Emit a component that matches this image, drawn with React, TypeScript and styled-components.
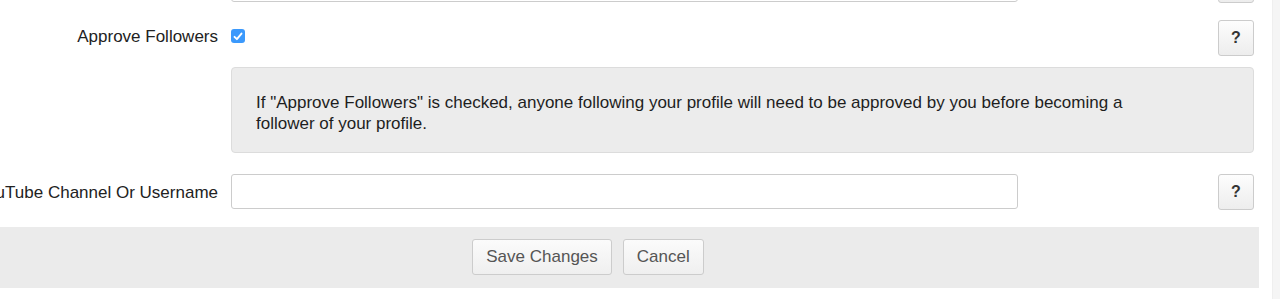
import styled, { createGlobalStyle } from "styled-components"

const GlobalStyle = createGlobalStyle`
  html, body {
    margin: 0;
    padding: 0;
    background: #fff;
    overflow: hidden;
  }
  body {
    font-family: "Liberation Sans", Arial, Helvetica, sans-serif;
    font-size: 17px;
    color: #222;
  }
`

const Page = styled.div`
  display: flex;
  height: 299px;
`

const Content = styled.div`
  flex: 1;
  min-width: 0;
  overflow: hidden;
`

const ScrollTrack = styled.div`
  width: 7px;
  background: #f5f5f5;
  border-left: 1px solid #efefef;
`

const Form = styled.form`
  width: 1342px;
  margin-left: -83px;
  margin-top: -33px;
  display: flex;
  flex-direction: column;
`

const Row = styled.div<{ $gap: number }>`
  display: grid;
  grid-template-columns: 301px 1fr 36px;
  column-gap: 13px;
  align-items: start;
  padding-right: 5px;
  margin-bottom: ${(p) => p.$gap}px;
`

const Label = styled.label<{ $top: number }>`
  text-align: right;
  line-height: 20px;
  padding-top: ${(p) => p.$top}px;
  color: #222;
  white-space: nowrap;
`

const TextInput = styled.input`
  box-sizing: border-box;
  width: 787px;
  height: 35px;
  border: 1px solid #ccc;
  border-radius: 3px;
  background: #fff;
  font: inherit;
  padding: 0 10px;
  outline: none;
`

const CheckCell = styled.div`
  padding-top: 9px;
  line-height: 0;
`

const CheckBox = styled.span`
  display: inline-flex;
  align-items: center;
  justify-content: center;
  width: 14px;
  height: 14px;
  border-radius: 3px;
  background: #3b99fc;
  color: #fff;
`

const HelpButton = styled.button`
  box-sizing: border-box;
  width: 36px;
  height: 36px;
  padding: 0;
  border: 1px solid #ccc;
  border-radius: 3px;
  background: linear-gradient(#fdfdfd, #ededed);
  color: #333;
  font-family: inherit;
  font-size: 16px;
  font-weight: 700;
`

const InfoBox = styled.div`
  grid-column: 2 / 4;
  box-sizing: border-box;
  padding: 24px 24px 18px;
  background: #ececec;
  border: 1px solid #dcdcdc;
  border-radius: 4px;
`

const InfoText = styled.p`
  margin: 0;
  max-width: 890px;
  line-height: 21px;
  color: #1e1e1e;
`

const Footer = styled.div`
  display: flex;
  justify-content: center;
  gap: 11px;
  padding: 12px 0 13px;
  background: #ebebeb;
`

const ActionButton = styled.button`
  height: 36px;
  padding: 0 13px;
  border: 1px solid #ccc;
  border-radius: 3px;
  background: linear-gradient(#fbfbfb, #efefef);
  color: #555;
  font-family: inherit;
  font-size: 17px;
`

function Check() {
  return (
    <svg width="10" height="9" viewBox="0 0 10 9" fill="none">
      <path d="M1.5 4.8 L3.9 7.2 L8.5 1.6" stroke="#fff" strokeWidth="1.9" strokeLinecap="round" strokeLinejoin="round" />
    </svg>
  )
}

export default function App() {
  return (
    <>
      <GlobalStyle />
      <Page>
        <Content>
          <Form onSubmit={(e) => e.preventDefault()}>
            <Row $gap={17}>
              <div />
              <TextInput type="text" aria-label="Previous field" />
              <HelpButton type="button" aria-label="Help" />
            </Row>
            <Row $gap={11}>
              <Label $top={7}>Approve Followers</Label>
              <CheckCell>
                <CheckBox>
                  <Check />
                </CheckBox>
              </CheckCell>
              <HelpButton type="button">?</HelpButton>
            </Row>
            <Row $gap={21}>
              <div />
              <InfoBox>
                <InfoText>
                  If "Approve Followers" is checked, anyone following your profile will need to be approved by you
                  before becoming a follower of your profile.
                </InfoText>
              </InfoBox>
            </Row>
            <Row $gap={17}>
              <Label $top={9}>YouTube Channel Or Username</Label>
              <TextInput type="text" />
              <HelpButton type="button">?</HelpButton>
            </Row>
            <Footer>
              <ActionButton type="button">Save Changes</ActionButton>
              <ActionButton type="button">Cancel</ActionButton>
            </Footer>
          </Form>
        </Content>
        <ScrollTrack />
      </Page>
    </>
  )
}
